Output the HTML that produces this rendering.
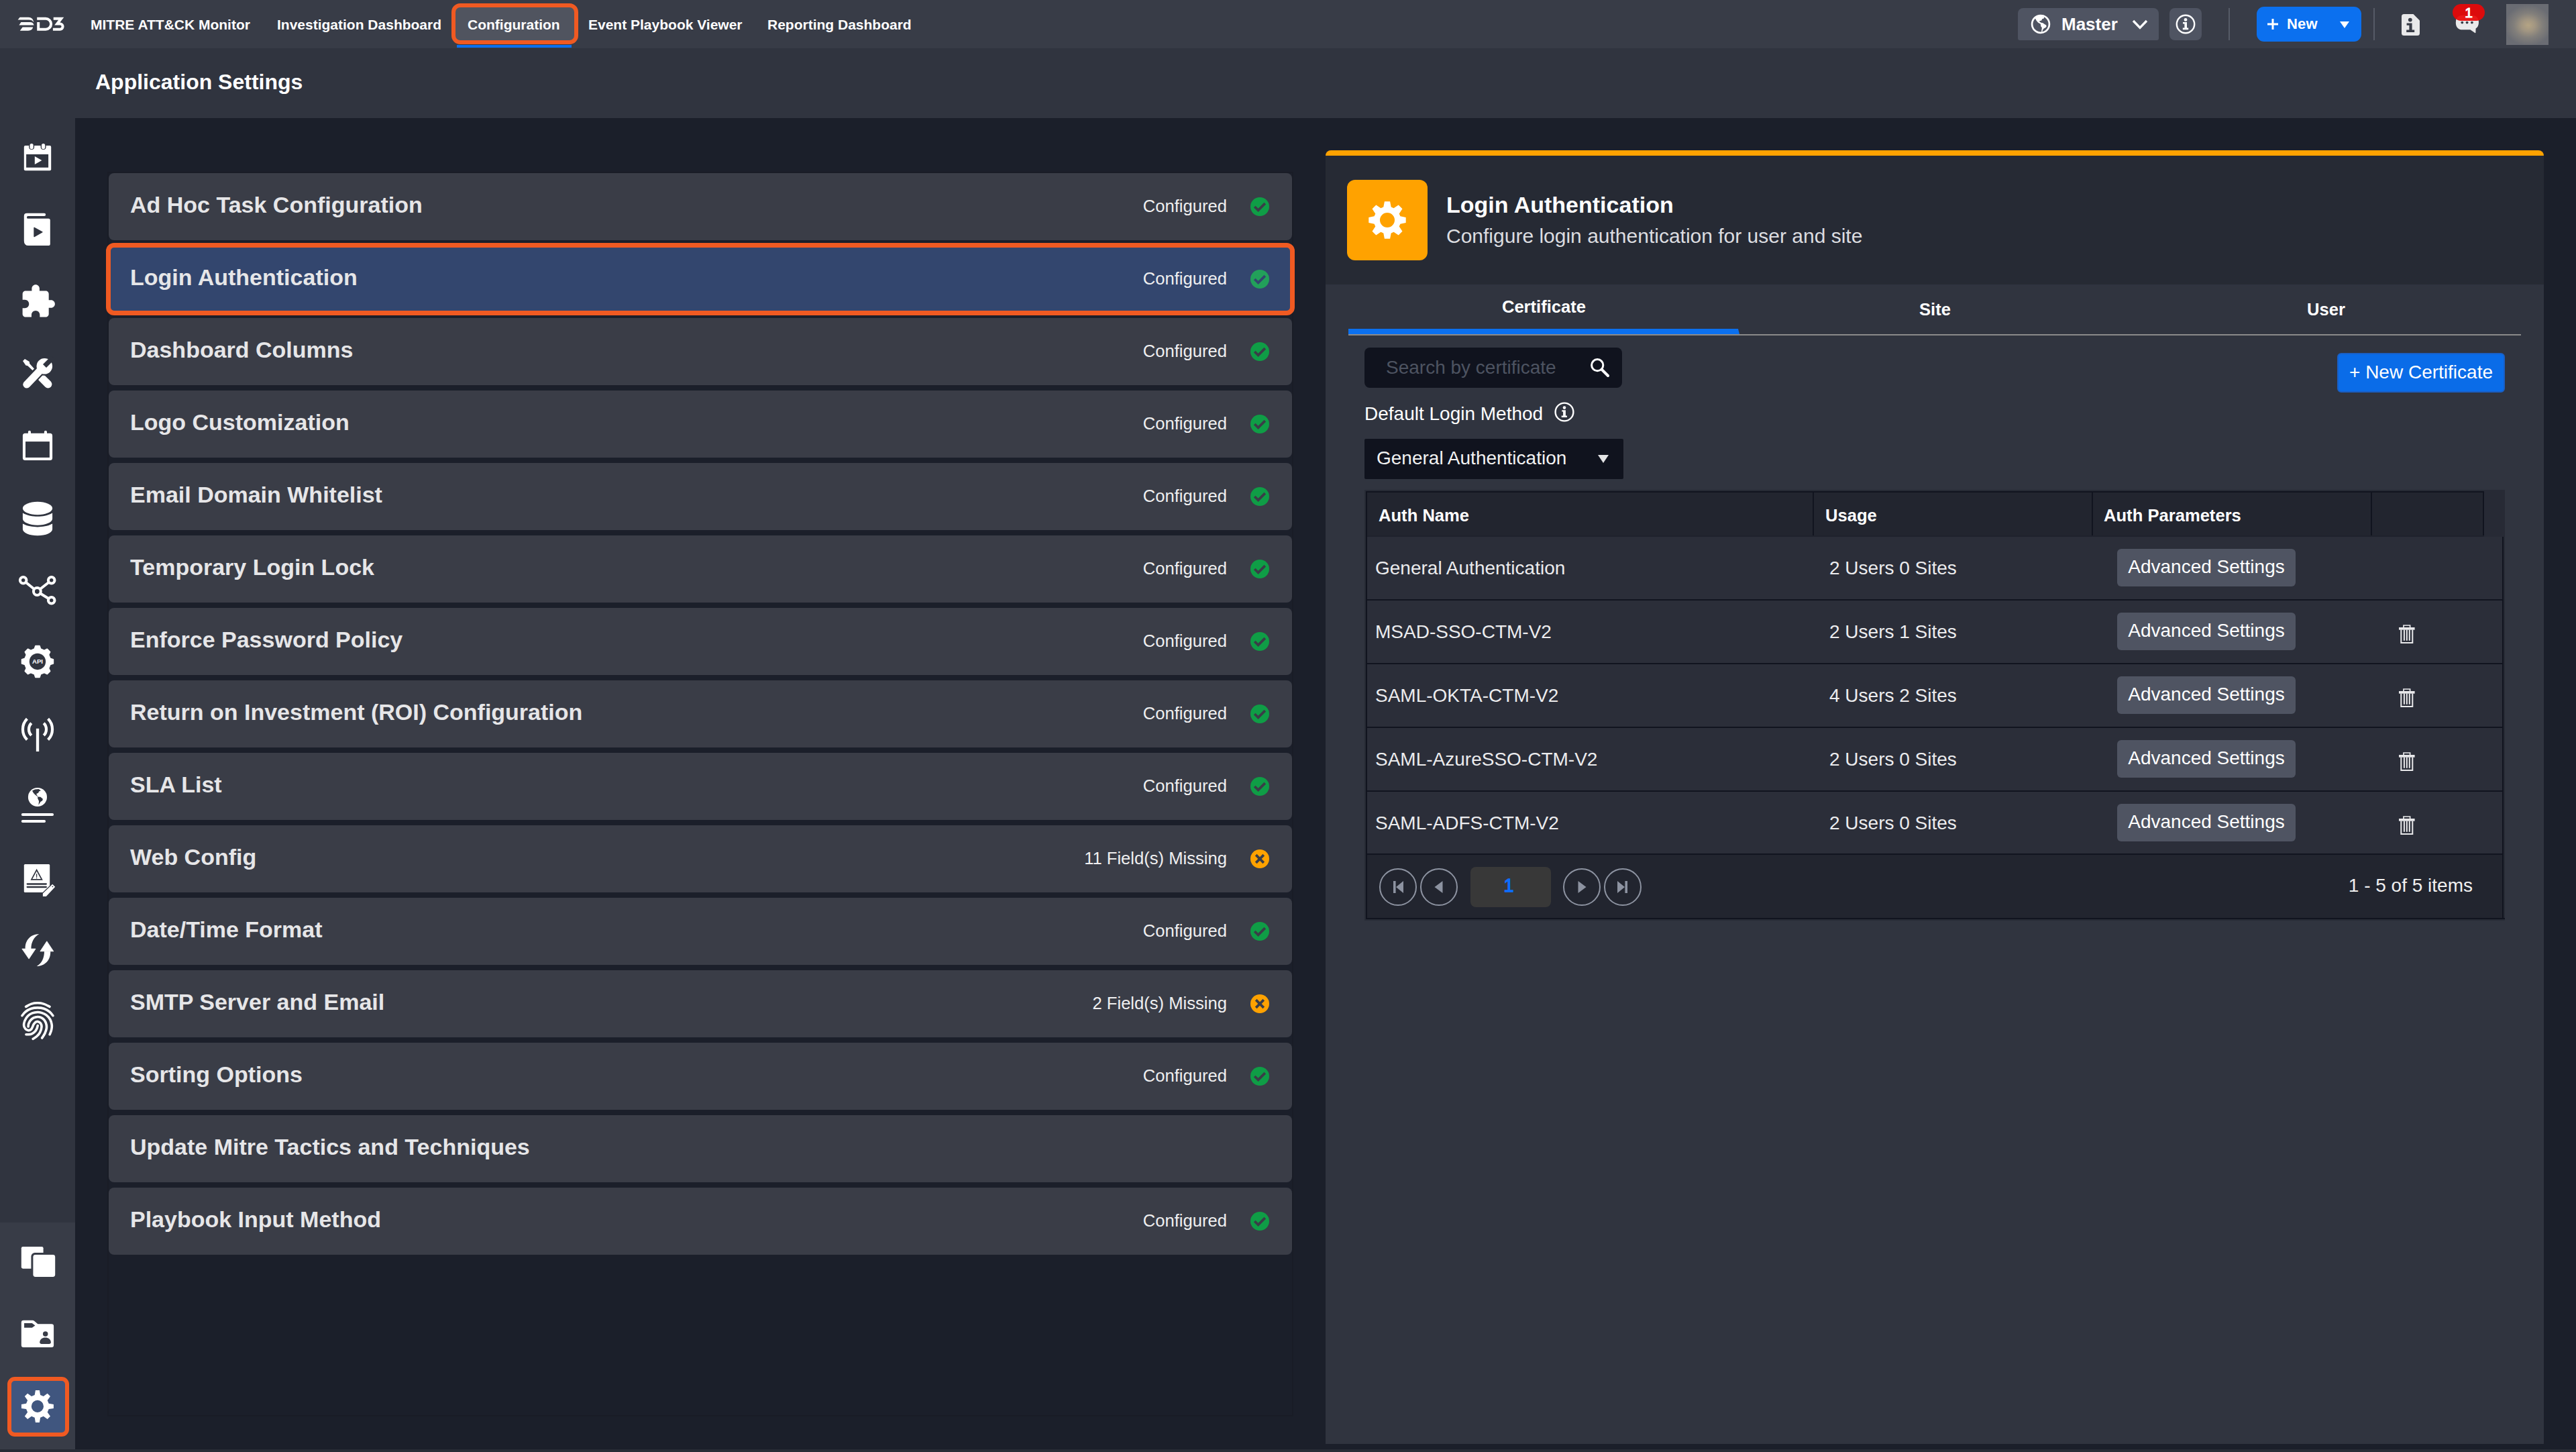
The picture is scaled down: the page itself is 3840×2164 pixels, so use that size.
<!DOCTYPE html>
<html lang="en">
<head>
<meta charset="utf-8">
<title>Application Settings</title>
<style>
*{box-sizing:border-box;margin:0;padding:0}
html,body{width:3840px;height:2164px;overflow:hidden;background:#262a34}
body{position:relative;font-family:"Liberation Sans",Arial,sans-serif;color:#fff}
.abs{position:absolute}
#topbar{position:absolute;left:0;top:0;width:3840px;height:72px;background:#383c47}
#subbar{position:absolute;left:0;top:72px;width:3840px;height:104px;background:#30343f}
#side{position:absolute;left:0;top:176px;width:112px;height:1988px;background:#30343f}
#sidebot{position:absolute;left:0;top:1822px;width:112px;height:338px;background:#383c47}
#main{position:absolute;left:112px;top:176px;width:3728px;height:1984px;background:#1b1f2a}
#strip{position:absolute;left:0;top:2160px;width:3840px;height:4px;background:#282c36}
.nav{position:absolute;top:0;height:72px;line-height:74px;font-size:21px;font-weight:bold;color:#fff;white-space:nowrap}
#pagetitle{position:absolute;left:142px;top:102px;font-size:32px;font-weight:bold;line-height:40px;color:#fff;white-space:nowrap}
/* list */
#listbox{position:absolute;left:160px;top:256px;width:1768px;height:1855px;border:2px solid #191c26}
.item{position:absolute;left:162px;width:1764px;height:100px;background:#3a3d47;border-radius:8px}
.item .t{position:absolute;left:32px;top:0;line-height:95px;font-size:34px;font-weight:bold;color:#e6e6e8;white-space:nowrap}
.item .s{position:absolute;right:97px;top:0;line-height:99px;font-size:25.6px;color:#efeff0;white-space:nowrap}
.item svg{position:absolute;left:1702px;top:36px;width:28px;height:28px}
.item.sel{background:#33466e;outline:7px solid #f05a22;outline-offset:-3px;border-radius:8px}
/* panel */
#panel{position:absolute;left:1976px;top:224px;width:1816px;height:1928px;background:#30343f;border-radius:8px 8px 0 0;overflow:hidden}
#panel .bar{position:absolute;left:0;top:0;width:100%;height:8px;background:#ffa200}
#panel .head{position:absolute;left:0;top:8px;width:100%;height:192px;background:#262a34}

/*PANELCSS*/
.ibox{position:absolute;left:32px;top:44px;width:120px;height:120px;border-radius:12px;background:#ffa200}
.ibox svg{position:absolute;left:32px;top:32px}
.ptitle{position:absolute;left:180px;top:61px;font-size:34px;font-weight:bold;line-height:40px;white-space:nowrap;color:#fff}
.psub{position:absolute;left:180px;top:110px;font-size:30px;line-height:36px;white-space:nowrap;color:#dcdde0}
.tabs{position:absolute;left:34px;top:200px;width:1748px;height:76px}
.tab{position:absolute;top:0;width:583px;height:74px;line-height:74px;text-align:center;font-size:25.6px;font-weight:bold;color:#fff}
.tab.on{line-height:66px}
.tline{position:absolute;left:0;top:74px;width:1748px;height:2px;background:#8a8a8a}
.tblue{position:absolute;left:0;top:66px;width:583px;height:8px;background:#0b70ef;clip-path:polygon(0 0,581px 0,583px 8px,0 8px)}
.search{position:absolute;left:58px;top:294px;width:384px;height:60px;border-radius:8px;background:#10131e}
.search span{position:absolute;left:32px;top:0;line-height:60px;font-size:28px;color:#4d5361;white-space:nowrap}
.search svg{position:absolute;left:336px;top:15px}
.newcert{position:absolute;left:1508px;top:302px;width:250px;height:59px;border-radius:6px;background:#0a6ce8;border:2px solid #1a5fc4;font-size:28px;line-height:53px;text-align:center;color:#fff;white-space:nowrap}
.dlabel{position:absolute;left:58px;top:376px;font-size:28px;line-height:34px;color:#fff;white-space:nowrap}
.dinfo{position:absolute;left:341px;top:375px}
.dd{position:absolute;left:58px;top:430px;width:386px;height:60px;background:#10131e;border-radius:2px}
.dd span{position:absolute;left:18px;top:0;line-height:57px;font-size:28px;color:#f2f2f2;white-space:nowrap}
.dd i{position:absolute;left:348px;top:24px;width:0;height:0;border-left:8.5px solid transparent;border-right:8.5px solid transparent;border-top:12px solid #e4e4e6}
.tbl{position:absolute;left:58px;top:506px;width:1700px;height:642px;background:#272b35}
.tin{position:absolute;left:2px;top:2px;width:1698px;height:638px;background:#272b35;border:2px solid #11141f;border-right:none;overflow:hidden}
.th{position:absolute;left:0;top:0;width:1696px;height:64px;background:#22252f;border-bottom:2px solid #1f222c;box-sizing:content-box}
.th span{position:absolute;top:0;line-height:68px;font-size:25.6px;font-weight:bold;color:#fff;white-space:nowrap}
.th b{position:absolute;top:0;width:2px;height:64px;background:#11141f}
.tbl em{position:absolute;left:1669px;top:0;width:31px;height:69.5px;background:#272a35;z-index:2}
.row{position:absolute;left:0;width:1694px;height:95px;border-bottom:2px solid #11141f;border-right:2px solid #11141f;background:#2b2e39}
.row.last{border-bottom:none;height:92px}
.row span{position:absolute;top:0;line-height:93px;font-size:28px;color:#ececee;white-space:nowrap}
.row .c1{left:12px}.row .c2{left:689px}
.row .adv{left:1118px;top:18.5px;width:266px;height:56px;line-height:54px;text-align:center;background:#4f5462;border-radius:6px;color:#fff}
.row .trash{position:absolute;left:1538px;top:36px;width:24px;height:28px}
.pager{position:absolute;left:0;top:537.5px;width:1694px;height:96.5px;background:#22252f;border-top:2px solid #11141f;border-right:2px solid #11141f}
.pb{position:absolute;top:20px;width:56px;height:56px;border:2px solid #8d93a1;border-radius:50%}
.pb svg{position:absolute;left:-2px;top:-2px;width:56px;height:56px}
.pn{position:absolute;left:154px;top:18px;width:120px;height:60px;border-radius:8px;background:#383838;color:#0d6efd;font-size:27px;font-weight:normal;-webkit-text-stroke:1.3px #0d6efd;line-height:56px;text-align:center;padding-right:6px}
.pinfo{position:absolute;right:44px;top:0;line-height:92px;font-size:28px;color:#f0f0f0;white-space:nowrap}
/*/PANELCSS*/

/*NAVCSS*/
.navsel{position:absolute;left:673px;top:5px;width:189px;height:61px;border:6px solid #f05a22;border-radius:13px;background:#50545f}
.navline{position:absolute;left:681px;top:67px;width:171px;height:4px;background:#0b70ef}
.master{position:absolute;left:3008px;top:12px;width:210px;height:48px;background:#4f5462;border-radius:8px 8px 3px 3px}
.master span{position:absolute;left:65px;top:0;line-height:48px;font-size:26px;font-weight:bold;color:#fff}
.infob{position:absolute;left:3234px;top:12px;width:48px;height:48px;background:#4f5462;border-radius:8px}
.vdiv{position:absolute;top:12px;width:2px;height:48px;background:#565b67}
.newb{position:absolute;left:3364px;top:10px;width:156px;height:52px;background:#0b70ef;border-radius:11px}
.newb span{position:absolute;left:45px;top:0;line-height:52px;font-size:22px;font-weight:bold;color:#fff;letter-spacing:0.2px}
.newb i{position:absolute;left:124px;top:22px;width:0;height:0;border-left:7px solid transparent;border-right:7px solid transparent;border-top:10px solid #fff}
.badge{position:absolute;left:3656px;top:6px;width:48px;height:25px;border-radius:13px;background:rgba(232,8,8,.93);color:#fff;font-size:21px;font-weight:normal;-webkit-text-stroke:1.1px #fff;line-height:25px;text-align:center}
.avatar{position:absolute;left:3736px;top:6px;width:63px;height:61px;background:radial-gradient(ellipse 56% 50% at 52% 52%,#b5a484 0%,#a29682 28%,#827f7b 60%,#6a6c73 100%)}
/*/NAVCSS*/

/*SIDECSS*/
.sidesel{position:absolute;left:11px;top:2052px;width:92px;height:89px;border:6px solid #f05a22;border-radius:11px;background:#40567f}
/*/SIDECSS*/
</style>
</head>
<body>
<div id="topbar"></div>
<div id="subbar"></div>
<div id="side"></div>
<div id="sidebot"></div>
<div id="main"></div>
<div id="strip"></div>
<!--NAV-->
<svg class="abs" style="left:16px;top:16px" width="100" height="40" viewBox="0 0 100 40">
<path d="M13.6 9.7H26.5C31 9.7 33.6 12.6 34.3 17.2C32.6 14.6 30.2 13.6 27 13.6H10.6z" fill="#fff"/>
<path d="M15.4 17.1H28.5C31.8 17.1 33.9 18.4 34.6 21.6H12.4z" fill="#fff"/>
<path d="M17.6 24.5H33.2C32.6 27.6 30.2 29.7 26 29.7H13.8z" fill="#fff"/>
<path d="M39.2 11.7H52.1A8 8 0 0 1 52.1 27.7H41.2V17" fill="none" stroke="#fff" stroke-width="4"/>
<path d="M63.7 11.7H75.2L69.2 19.5H73.5A4.1 4.1 0 0 1 73.5 27.7H62.9" fill="none" stroke="#fff" stroke-width="4" stroke-linejoin="miter"/>
</svg>
<div class="nav" style="left:135px">MITRE ATT&amp;CK Monitor</div>
<div class="nav" style="left:413px">Investigation Dashboard</div>
<div class="navsel"></div><div class="navline"></div>
<div class="nav" style="left:697px">Configuration</div>
<div class="nav" style="left:877px">Event Playbook Viewer</div>
<div class="nav" style="left:1144px">Reporting Dashboard</div>
<div class="master">
<svg class="abs" style="left:19px;top:9px" width="30" height="30" viewBox="0 0 30 30"><circle cx="15" cy="14.9" r="12.9" fill="none" stroke="#fff" stroke-width="2.7"/><path d="M6.8 6.3L8 4.5L12 2.6L16 2.2L20.3 4.5L19.7 6.6L17.2 7.2L16.3 9.4L13 10.6L13.6 11.8L16.9 13.3L17.8 13L23.3 16.6L23.6 18.8L22.1 20.3L19.7 21.5L18.2 23.6L17.2 26.6H16L16.9 20.3L15.4 18.5L14.8 14.8L11.2 12.7L8.8 10z" fill="#fff"/></svg>
<span>Master</span>
<svg class="abs" style="left:170px;top:17px" width="24" height="15" viewBox="0 0 24 15"><path d="M2 2l10 10.4L22 2" fill="none" stroke="#fff" stroke-width="3.4"/></svg>
</div>
<div class="infob"><svg class="abs" style="left:9px;top:9px" width="30" height="30" viewBox="0 0 30 30"><circle cx="15" cy="15" r="13.2" fill="none" stroke="#fff" stroke-width="2.4"/><circle cx="15" cy="8.4" r="2.4" fill="#fff"/><path d="M11 12h6v8.6h2.2v2.6H10.8v-2.6h2.6v-6H11z" fill="#fff"/></svg></div>
<div class="vdiv" style="left:3322px"></div>
<div class="newb">
<svg class="abs" style="left:16px;top:18px" width="16" height="16" viewBox="0 0 16 16"><path d="M8 0v16M0 8h16" stroke="#fff" stroke-width="3"/></svg>
<span>New</span>
<i></i>
</div>
<div class="vdiv" style="left:3538px"></div>
<svg class="abs" style="left:3580px;top:21px" width="27" height="32" viewBox="0 0 27 32"><path d="M3.5 0H17.5L27 9.5V28.5Q27 32 23.5 32H3.5Q0 32 0 28.5V3.5Q0 0 3.5 0z" fill="#e9e9ea"/><circle cx="12.8" cy="8.6" r="2.9" fill="#383c47"/><path d="M7.6 13.4h8v10.2h3.6v3.4H7.2v-3.4h4.2v-6.8H7.6z" fill="#383c47"/></svg>
<svg class="abs" style="left:3660px;top:22px" width="36" height="28" viewBox="0 0 36 28"><path d="M11 0.8H24Q35 0.8 35 11.4Q35 17.6 30.6 20.4L30.4 26.6Q30.3 27.6 29.3 27L22.4 22.2H11Q0.8 22.2 0.8 11.4Q0.8 0.8 11 0.8z" fill="#e9e9ea"/><circle cx="10.3" cy="11.6" r="1.9" fill="#383c47"/><circle cx="17.6" cy="11.6" r="1.9" fill="#383c47"/><circle cx="24.9" cy="11.6" r="1.9" fill="#383c47"/></svg>
<div class="badge">1</div>
<div class="avatar"></div>
<!--/NAV-->
<!--SIDEICONS-->
<svg class="abs" style="left:26px;top:204px" width="60" height="60" viewBox="0 0 60 60"><rect x="9.8" y="13" width="40.4" height="37.2" rx="2" fill="#fff"/><rect x="13.1" y="26" width="33" height="19.7" fill="#30343f"/><rect x="17.1" y="8.2" width="8" height="10.9" rx="4" fill="#30343f"/><rect x="34.6" y="8.2" width="8" height="10.9" rx="4" fill="#30343f"/><rect x="18.5" y="9.9" width="5.2" height="8.3" rx="2.6" fill="#fff"/><rect x="36" y="9.9" width="5.2" height="8.3" rx="2.6" fill="#fff"/><path d="M25.8 28.9L36.4 34.9L25.8 41.1z" fill="#fff"/></svg>
<svg class="abs" style="left:26px;top:312px" width="60" height="60" viewBox="0 0 60 60"><path fill="#fff" fill-rule="evenodd" d="M14 5.8H40A2.15 2.15 0 0 1 40 10.1H15.8A1.85 1.85 0 0 0 15.8 13.8H46.3A2.5 2.5 0 0 1 48.8 16.3V52A2.1 2.1 0 0 1 46.7 54.1H16.5Q9.8 54.1 9.8 47V10Q9.8 5.8 14 5.8zM25.4 26.8L37.2 33.3Q38.2 33.9 37.2 34.5L25.4 41.2Q24.3 41.7 24.3 40.6V27.4Q24.3 26.3 25.4 26.8z"/></svg>
<svg class="abs" style="left:29.25px;top:421.5px" width="55.2" height="55.2" viewBox="0 0 24 24"><path d="M20.5 11H19V7c0-1.1-.9-2-2-2h-4V3.5C13 2.12 11.88 1 10.5 1S8 2.12 8 3.5V5H4c-1.1 0-1.99.9-1.99 2v3.8H3.5c1.49 0 2.7 1.21 2.7 2.7s-1.21 2.7-2.7 2.7H2V20c0 1.1.9 2 2 2h3.8v-1.5c0-1.49 1.21-2.7 2.7-2.7 1.49 0 2.7 1.21 2.7 2.7V22H17c1.1 0 2-.9 2-2v-4h1.5c1.38 0 2.5-1.12 2.5-2.5S21.88 11 20.5 11z" fill="#fff"/></svg>
<svg class="abs" style="left:26px;top:526px" width="60" height="60" viewBox="0 0 60 60"><path d="M36 37L45.6 46.6" stroke="#fff" stroke-width="11.6" stroke-linecap="round"/>
<path d="M8 12L11 8.9L17.8 13L18.2 15.9L25 23.5L22.5 26L15.3 19.2L12.4 18.6z" fill="#fff"/>
<circle cx="40.3" cy="19.8" r="14" fill="#30343f"/>
<path d="M34 26L13.9 47" stroke="#30343f" stroke-width="15.2" stroke-linecap="round"/>
<circle cx="40.3" cy="19.8" r="11.8" fill="#fff"/>
<path d="M33 27L13.9 47" stroke="#fff" stroke-width="11.2" stroke-linecap="round"/>
<path d="M38 16.9L50 4.9L57 7.9L43 21.9z" fill="#30343f"/></svg>
<svg class="abs" style="left:26px;top:634px" width="60" height="60" viewBox="0 0 60 60"><rect x="7.9" y="11.8" width="44.2" height="40.3" rx="3.6" fill="#fff"/><rect x="12" y="24.1" width="35.9" height="23.8" fill="#30343f"/><rect x="15.9" y="7.85" width="4.1" height="8" rx="2" fill="#fff"/><rect x="39.9" y="7.85" width="4.1" height="8" rx="2" fill="#fff"/></svg>
<svg class="abs" style="left:26px;top:742px" width="60" height="62" viewBox="0 0 60 62"><ellipse cx="30" cy="15.5" rx="22.1" ry="9.7" fill="#fff"/>
<path d="M7.9 22.5C15 26.6 23 27.7 30 27.7S45 26.6 52.1 22.5V31A22.1 9.7 0 0 1 7.9 31z" fill="#fff"/>
<path d="M7.9 38.6C15 42.5 23 43.4 30 43.4S45 42.5 52.1 38.6V46.6A22.1 9.7 0 0 1 7.9 46.6z" fill="#fff"/></svg>
<svg class="abs" style="left:22px;top:846px" width="68" height="68" viewBox="0 0 68 68"><path d="M12.65 18.7L33.35 35.5L54.7 18.7M33.35 35.5L54.7 48.7" stroke="#fff" stroke-width="4" fill="none"/>
<circle cx="12.65" cy="18.7" r="4.75" fill="#30343f" stroke="#fff" stroke-width="4.1"/>
<circle cx="54.7" cy="18.7" r="4.75" fill="#30343f" stroke="#fff" stroke-width="4.1"/>
<circle cx="54.7" cy="48.7" r="4.75" fill="#30343f" stroke="#fff" stroke-width="4.1"/>
<circle cx="33.35" cy="35.5" r="5.4" fill="#30343f" stroke="#fff" stroke-width="4"/></svg>
<svg class="abs" style="left:22px;top:952px" width="68" height="68" viewBox="0 0 68 68"><path d="M38.4 52.6L36.9 57.2L31.0 57.2L29.5 52.6L23.9 50.3L19.6 52.4L15.5 48.3L17.6 44.0L15.3 38.4L10.7 36.9L10.7 31.0L15.3 29.5L17.6 23.9L15.5 19.6L19.6 15.5L23.9 17.6L29.5 15.3L31.0 10.7L36.9 10.7L38.4 15.3L44.0 17.6L48.3 15.5L52.4 19.6L50.3 23.9L52.6 29.5L57.2 31.0L57.2 36.9L52.6 38.4L50.3 44.0L52.4 48.3L48.3 52.4L44.0 50.3Z" fill="#fff" stroke="#fff" stroke-width="2" stroke-linejoin="round"/><circle cx="33.96" cy="33.96" r="12.2" fill="#30343f"/><text x="33.96" y="37.1" font-family="Liberation Sans,Arial,sans-serif" font-weight="bold" font-size="9.6" fill="#fff" text-anchor="middle">API</text></svg>
<svg class="abs" style="left:22px;top:1060px" width="68" height="68" viewBox="0 0 68 68"><path d="M49.6 11.3A22.1 22.1 0 0 1 49.6 42.5M18.4 42.5A22.1 22.1 0 0 1 18.4 11.3M43.2 17.7A13 13 0 0 1 43.2 36.1M24.8 36.1A13 13 0 0 1 24.8 17.7" fill="none" stroke="#fff" stroke-width="4.2"/><rect x="31.85" y="25.8" width="4.35" height="34.2" fill="#fff"/></svg>
<svg class="abs" style="left:22px;top:1166px" width="68" height="68" viewBox="0 0 68 68"><circle cx="33.96" cy="22" r="14.05" fill="#fff"/>
<path d="M26 12.4L30 10.5L35.6 10.1L38.9 12.2L36.1 13.6L35.1 15.7L32.3 16.9L32.8 18.7L34.7 21.5L38.4 21.8L41.9 24.8L41.2 27.2L38.4 29L35.4 33.7L36.1 28.1L34.2 23.9L34.3 21.6L30.5 18.5L28 16z" fill="#30343f"/>
<rect x="9.8" y="45.9" width="48.3" height="4.2" rx="2.1" fill="#fff"/><rect x="9.8" y="56" width="36.3" height="4.1" rx="2.05" fill="#fff"/></svg>
<svg class="abs" style="left:22px;top:1276px" width="68" height="68" viewBox="0 0 68 68"><rect x="13.8" y="11.9" width="38.4" height="42.2" rx="1.6" fill="#fff"/>
<path d="M32.6 20.6L24.9 34.9H40.4z" fill="none" stroke="#30343f" stroke-width="1.7"/>
<path d="M32.6 26.2V31.1" stroke="#30343f" stroke-width="1.3"/><circle cx="32.6" cy="32.5" r="0.8" fill="#30343f"/>
<path d="M18.7 41.5H46.8M18.7 46H46.8" stroke="#30343f" stroke-width="2.3" stroke-linecap="round"/>
<path d="M56.2 41.8L60.2 45.7L46.8 60H41.9V55.5z" fill="#fff" stroke="#30343f" stroke-width="2.6" paint-order="stroke"/>
<circle cx="56.4" cy="45.3" r="0.9" fill="#30343f"/></svg>
<svg class="abs" style="left:22px;top:1382px" width="68" height="68" viewBox="0 0 68 68"><path d="M10.8 32.1H31.1L21.1 47.1z" fill="#fff" stroke="#fff" stroke-width="0.8" stroke-linejoin="round"/>
<path d="M15.7 32.1C15.2 19 24 10.3 36.3 10.1C29 14 24.4 22 24.4 32.1z" fill="#fff"/>
<path d="M57.8 35.8H37.9L47.8 20.8z" fill="#fff" stroke="#fff" stroke-width="0.8" stroke-linejoin="round"/>
<path d="M53.2 35.8C53.7 49 45 57.8 32.8 58.1C40 54 44 46 44 35.8z" fill="#fff"/></svg>
<svg class="abs" style="left:22px;top:1486px" width="68" height="68" viewBox="0 0 68 68"><path d="M52.2 55.7C52.6 54.6 54.1 51.4 54.6 49.2C55.1 46.9 55.5 44.7 55.3 42.2C55.0 39.6 54.3 36.3 52.9 33.7C51.5 31.1 49.0 28.4 46.8 26.7C44.7 25.0 42.0 24.1 39.8 23.4C37.7 22.7 36.2 22.4 34.0 22.5C31.7 22.6 28.6 23.0 26.2 23.9C23.8 24.8 21.5 26.2 19.7 28.1C17.8 30.0 16.0 32.8 15.0 35.1C14.0 37.5 13.5 40.2 13.6 42.2C13.7 44.1 14.4 45.6 15.5 46.8C16.5 48.1 18.7 49.4 20.1 49.6C21.6 49.9 23.3 49.2 24.4 48.2C25.4 47.3 26.1 45.3 26.7 44.0C27.3 42.8 27.4 41.8 28.1 40.7C28.8 39.7 29.9 38.2 30.9 37.5C31.9 36.8 32.9 36.3 34.2 36.5C35.4 36.8 37.4 37.5 38.4 38.9C39.4 40.2 40.2 42.2 40.0 44.5C39.9 46.8 38.7 50.6 37.5 52.9C36.3 55.3 34.5 57.0 32.8 58.5C31.1 60.1 28.1 61.7 27.2 62.3M40.7 60.9C41.5 59.7 43.9 56.2 45.0 53.9C46.1 51.5 47.0 49.2 47.3 46.8C47.6 44.5 47.5 42.0 46.8 39.8C46.2 37.6 44.9 35.3 43.6 33.7C42.2 32.2 40.5 31.1 38.9 30.4C37.3 29.7 35.8 29.4 34.0 29.5C32.2 29.6 29.9 30.1 28.1 30.9C26.3 31.8 24.7 33.2 23.4 34.7C22.2 36.1 21.2 38.3 20.6 39.8C20.1 41.4 20.2 43.3 20.1 44.0M34.2 42.6C34.0 43.4 33.5 45.8 32.8 47.3C32.1 48.8 31.2 50.3 30.0 51.5C28.7 52.8 26.9 54.1 25.3 54.8C23.7 55.5 22.0 55.6 20.6 55.7C19.2 55.9 17.5 55.7 16.9 55.7M16.6 14.3C18.0 13.6 21.9 11.0 24.8 10.1C27.7 9.1 30.9 8.7 34.0 8.7C37.0 8.7 40.1 9.1 43.1 10.1C46.1 11.0 50.5 13.6 52.0 14.3M11.0 27.6C11.8 26.7 13.7 23.7 15.9 22.0C18.1 20.3 21.4 18.3 24.4 17.3C27.4 16.3 30.8 15.9 34.0 15.9C37.2 15.9 40.6 16.3 43.6 17.3C46.6 18.3 49.8 20.3 52.0 22.0C54.2 23.7 56.1 26.7 56.9 27.6" fill="none" stroke="#fff" stroke-width="3.6" stroke-linecap="round" stroke-linejoin="round"/></svg>
<svg class="abs" style="left:22px;top:1846px" width="68" height="68" viewBox="0 0 68 68"><rect x="9.8" y="11.9" width="32.8" height="32.8" rx="2.4" fill="#fff"/><rect x="24.4" y="21.1" width="38.8" height="38.8" rx="5.5" fill="#383c47"/><rect x="27.4" y="24.1" width="32.8" height="32.8" rx="3.4" fill="#fff"/></svg>
<svg class="abs" style="left:22px;top:1954px" width="68" height="68" viewBox="0 0 68 68"><path d="M13.1 13.8H26.6Q27.8 13.8 28.8 14.6L34.4 19.2H54.8A3.3 3.3 0 0 1 58.1 22.5V50.8A3.3 3.3 0 0 1 54.8 54.1H13.1A3.3 3.3 0 0 1 9.8 50.8V17.1A3.3 3.3 0 0 1 13.1 13.8z" fill="#fff"/>
<path d="M14.05 18H25.8L30.4 21.5L25.8 24.8H14.05z" fill="#383c47"/>
<circle cx="45.7" cy="34" r="3.75" fill="#383c47"/>
<path d="M37.2 46.5C37.6 42 41 39.6 45.55 39.6S53.5 42 53.9 46.5Q53.9 48.9 51.5 48.9H39.6Q37.2 48.9 37.2 46.5z" fill="#383c47"/></svg>
<div class="sidesel"></div>
<svg class="abs" style="left:0;top:2046px" width="112" height="104" viewBox="0 2046 112 104"><path d="M60.1 2112.7L58.9 2119.9L52.9 2119.9L51.7 2112.7L47.0 2110.7L41.1 2115.0L36.8 2110.7L41.1 2104.8L39.1 2100.1L31.9 2098.9L31.9 2092.9L39.1 2091.7L41.1 2087.0L36.8 2081.1L41.1 2076.8L47.0 2081.1L51.7 2079.1L52.9 2071.9L58.9 2071.9L60.1 2079.1L64.8 2081.1L70.7 2076.8L75.0 2081.1L70.7 2087.0L72.7 2091.7L79.9 2092.9L79.9 2098.9L72.7 2100.1L70.7 2104.8L75.0 2110.7L70.7 2115.0L64.8 2110.7ZM65.0 2095.9A9.1 9.1 0 1 0 46.8 2095.9A9.1 9.1 0 1 0 65.0 2095.9Z" fill="#fff" fill-rule="evenodd"/></svg>
<!--/SIDEICONS-->
<div id="pagetitle">Application Settings</div>
<div id="listbox"></div>
<!--LIST-->
<div class="item" style="top:258px"><div class="t">Ad Hoc Task Configuration</div><div class="s">Configured</div><svg viewBox="0 0 28 28"><circle cx="14" cy="14" r="14" fill="#0f9d46"/><path d="M6.2 14L11.6 19.4L21.8 9.2" fill="none" stroke="#3a3d47" stroke-width="3.8"/></svg></div>
<div class="item sel" style="top:366px"><div class="t">Login Authentication</div><div class="s">Configured</div><svg viewBox="0 0 28 28"><circle cx="14" cy="14" r="14" fill="#22a05a"/><path d="M6.2 14L11.6 19.4L21.8 9.2" fill="none" stroke="#33466e" stroke-width="3.8"/></svg></div>
<div class="item" style="top:474px"><div class="t">Dashboard Columns</div><div class="s">Configured</div><svg viewBox="0 0 28 28"><circle cx="14" cy="14" r="14" fill="#0f9d46"/><path d="M6.2 14L11.6 19.4L21.8 9.2" fill="none" stroke="#3a3d47" stroke-width="3.8"/></svg></div>
<div class="item" style="top:582px"><div class="t">Logo Customization</div><div class="s">Configured</div><svg viewBox="0 0 28 28"><circle cx="14" cy="14" r="14" fill="#0f9d46"/><path d="M6.2 14L11.6 19.4L21.8 9.2" fill="none" stroke="#3a3d47" stroke-width="3.8"/></svg></div>
<div class="item" style="top:690px"><div class="t">Email Domain Whitelist</div><div class="s">Configured</div><svg viewBox="0 0 28 28"><circle cx="14" cy="14" r="14" fill="#0f9d46"/><path d="M6.2 14L11.6 19.4L21.8 9.2" fill="none" stroke="#3a3d47" stroke-width="3.8"/></svg></div>
<div class="item" style="top:798px"><div class="t">Temporary Login Lock</div><div class="s">Configured</div><svg viewBox="0 0 28 28"><circle cx="14" cy="14" r="14" fill="#0f9d46"/><path d="M6.2 14L11.6 19.4L21.8 9.2" fill="none" stroke="#3a3d47" stroke-width="3.8"/></svg></div>
<div class="item" style="top:906px"><div class="t">Enforce Password Policy</div><div class="s">Configured</div><svg viewBox="0 0 28 28"><circle cx="14" cy="14" r="14" fill="#0f9d46"/><path d="M6.2 14L11.6 19.4L21.8 9.2" fill="none" stroke="#3a3d47" stroke-width="3.8"/></svg></div>
<div class="item" style="top:1014px"><div class="t">Return on Investment (ROI) Configuration</div><div class="s">Configured</div><svg viewBox="0 0 28 28"><circle cx="14" cy="14" r="14" fill="#0f9d46"/><path d="M6.2 14L11.6 19.4L21.8 9.2" fill="none" stroke="#3a3d47" stroke-width="3.8"/></svg></div>
<div class="item" style="top:1122px"><div class="t">SLA List</div><div class="s">Configured</div><svg viewBox="0 0 28 28"><circle cx="14" cy="14" r="14" fill="#0f9d46"/><path d="M6.2 14L11.6 19.4L21.8 9.2" fill="none" stroke="#3a3d47" stroke-width="3.8"/></svg></div>
<div class="item" style="top:1230px"><div class="t">Web Config</div><div class="s">11 Field(s) Missing</div><svg viewBox="0 0 28 28"><circle cx="14" cy="14" r="14" fill="#ffa200"/><path d="M8.2 8.2l11.6 11.6M19.8 8.2L8.2 19.8" fill="none" stroke="#3a3d47" stroke-width="3.8"/></svg></div>
<div class="item" style="top:1338px"><div class="t">Date/Time Format</div><div class="s">Configured</div><svg viewBox="0 0 28 28"><circle cx="14" cy="14" r="14" fill="#0f9d46"/><path d="M6.2 14L11.6 19.4L21.8 9.2" fill="none" stroke="#3a3d47" stroke-width="3.8"/></svg></div>
<div class="item" style="top:1446px"><div class="t">SMTP Server and Email</div><div class="s">2 Field(s) Missing</div><svg viewBox="0 0 28 28"><circle cx="14" cy="14" r="14" fill="#ffa200"/><path d="M8.2 8.2l11.6 11.6M19.8 8.2L8.2 19.8" fill="none" stroke="#3a3d47" stroke-width="3.8"/></svg></div>
<div class="item" style="top:1554px"><div class="t">Sorting Options</div><div class="s">Configured</div><svg viewBox="0 0 28 28"><circle cx="14" cy="14" r="14" fill="#0f9d46"/><path d="M6.2 14L11.6 19.4L21.8 9.2" fill="none" stroke="#3a3d47" stroke-width="3.8"/></svg></div>
<div class="item" style="top:1662px"><div class="t">Update Mitre Tactics and Techniques</div></div>
<div class="item" style="top:1770px"><div class="t">Playbook Input Method</div><div class="s">Configured</div><svg viewBox="0 0 28 28"><circle cx="14" cy="14" r="14" fill="#0f9d46"/><path d="M6.2 14L11.6 19.4L21.8 9.2" fill="none" stroke="#3a3d47" stroke-width="3.8"/></svg></div>
<!--/LIST-->
<div id="panel">
<div class="bar"></div>
<div class="head"></div>
<!--PANEL-->
<div class="ibox"><svg viewBox="0 0 56 56" width="56" height="56"><path fill="#fff" fill-rule="evenodd" d="M47.4 22.3L55.7 23.9L55.7 32.1L47.4 33.7L45.7 37.6L50.5 44.7L44.7 50.5L37.6 45.7L33.7 47.4L32.1 55.7L23.9 55.7L22.3 47.4L18.4 45.7L11.3 50.5L5.5 44.7L10.3 37.6L8.6 33.7L0.3 32.1L0.3 23.9L8.6 22.3L10.3 18.4L5.5 11.3L11.3 5.5L18.4 10.3L22.3 8.6L23.9 0.3L32.1 0.3L33.7 8.6L37.6 10.3L44.7 5.5L50.5 11.3L45.7 18.4ZM39.0 28.0A11 11 0 1 0 17.0 28.0A11 11 0 1 0 39.0 28.0Z"/></svg></div>
<div class="ptitle">Login Authentication</div>
<div class="psub">Configure login authentication for user and site</div>
<div class="tabs">
<div class="tab on" style="left:0">Certificate</div>
<div class="tab" style="left:583px">Site</div>
<div class="tab" style="left:1166px">User</div>
<div class="tline"></div>
<div class="tblue"></div>
</div>
<div class="search"><span>Search by certificate</span>
<svg viewBox="0 0 30 30" width="30" height="30"><circle cx="11.2" cy="11.2" r="8.6" fill="none" stroke="#fff" stroke-width="3"/><path d="M17.5 17.5L27 27" stroke="#fff" stroke-width="4" stroke-linecap="round"/></svg></div>
<div class="newcert">+ New Certificate</div>
<div class="dlabel">Default Login Method</div>
<svg class="dinfo" viewBox="0 0 30 30" width="30" height="30"><circle cx="15" cy="15" r="13.4" fill="none" stroke="#fff" stroke-width="2.4"/><circle cx="15" cy="8.6" r="2.3" fill="#fff"/><path d="M11.3 12.2h5.6v8.3h2v2.4h-8.2v-2.4h2.4v-5.9h-1.8z" fill="#fff"/></svg>
<div class="dd"><span>General Authentication</span><i></i></div>
<div class="tbl"><em></em><div class="tin">
<div class="th"><span style="left:17px">Auth Name</span><b style="left:664px"></b><span style="left:683px">Usage</span><b style="left:1080px"></b><span style="left:1098px">Auth Parameters</span><b style="left:1496px"></b><b style="left:1663px"></b></div>
<div class="row" style="top:65.5px"><span class="c1">General Authentication</span><span class="c2">2 Users 0 Sites</span><span class="adv">Advanced Settings</span></div>
<div class="row" style="top:160.5px"><span class="c1">MSAD-SSO-CTM-V2</span><span class="c2">2 Users 1 Sites</span><span class="adv">Advanced Settings</span><svg class="trash" viewBox="0 0 24 28"><path d="M7 4.2V1h9.6v3.2" fill="none" stroke="#e9e9eb" stroke-width="1.7"/><rect x="0" y="4" width="23.6" height="3.7" fill="#e9e9eb"/><path d="M3.3 7.5V26.9H20.3V7.5" fill="none" stroke="#e9e9eb" stroke-width="2"/><path d="M7.9 7.5v16.2M11.8 7.5v16.2M15.8 7.5v16.2" stroke="#e9e9eb" stroke-width="2"/></svg></div>
<div class="row" style="top:255.5px"><span class="c1">SAML-OKTA-CTM-V2</span><span class="c2">4 Users 2 Sites</span><span class="adv">Advanced Settings</span><svg class="trash" viewBox="0 0 24 28"><path d="M7 4.2V1h9.6v3.2" fill="none" stroke="#e9e9eb" stroke-width="1.7"/><rect x="0" y="4" width="23.6" height="3.7" fill="#e9e9eb"/><path d="M3.3 7.5V26.9H20.3V7.5" fill="none" stroke="#e9e9eb" stroke-width="2"/><path d="M7.9 7.5v16.2M11.8 7.5v16.2M15.8 7.5v16.2" stroke="#e9e9eb" stroke-width="2"/></svg></div>
<div class="row" style="top:350.5px"><span class="c1">SAML-AzureSSO-CTM-V2</span><span class="c2">2 Users 0 Sites</span><span class="adv">Advanced Settings</span><svg class="trash" viewBox="0 0 24 28"><path d="M7 4.2V1h9.6v3.2" fill="none" stroke="#e9e9eb" stroke-width="1.7"/><rect x="0" y="4" width="23.6" height="3.7" fill="#e9e9eb"/><path d="M3.3 7.5V26.9H20.3V7.5" fill="none" stroke="#e9e9eb" stroke-width="2"/><path d="M7.9 7.5v16.2M11.8 7.5v16.2M15.8 7.5v16.2" stroke="#e9e9eb" stroke-width="2"/></svg></div>
<div class="row last" style="top:445.5px"><span class="c1">SAML-ADFS-CTM-V2</span><span class="c2">2 Users 0 Sites</span><span class="adv">Advanced Settings</span><svg class="trash" viewBox="0 0 24 28"><path d="M7 4.2V1h9.6v3.2" fill="none" stroke="#e9e9eb" stroke-width="1.7"/><rect x="0" y="4" width="23.6" height="3.7" fill="#e9e9eb"/><path d="M3.3 7.5V26.9H20.3V7.5" fill="none" stroke="#e9e9eb" stroke-width="2"/><path d="M7.9 7.5v16.2M11.8 7.5v16.2M15.8 7.5v16.2" stroke="#e9e9eb" stroke-width="2"/></svg></div>
<div class="pager">
<div class="pb" style="left:18px"><svg viewBox="0 0 56 56"><path d="M21 19h3.6v18H21zM36 19v18l-11-9z" fill="#8d93a1"/></svg></div>
<div class="pb" style="left:79px"><svg viewBox="0 0 56 56"><path d="M33.5 19v18l-12-9z" fill="#8d93a1"/></svg></div>
<div class="pn">1</div>
<div class="pb" style="left:292px"><svg viewBox="0 0 56 56"><path d="M22.5 19v18l12-9z" fill="#8d93a1"/></svg></div>
<div class="pb" style="left:353px"><svg viewBox="0 0 56 56"><path d="M31.4 19H35v18h-3.6zM20 19v18l11-9z" fill="#8d93a1"/></svg></div>
<div class="pinfo">1 - 5 of 5 items</div>
</div>
</div></div>
<!--/PANEL-->
</div>
</body>
</html>
